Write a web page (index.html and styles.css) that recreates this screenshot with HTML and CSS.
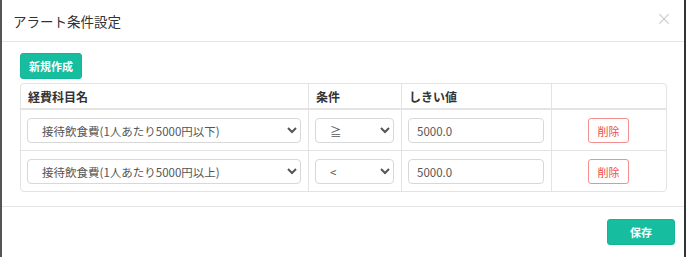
FILE: index.html
```html
<html>
  <head>
    <link rel="stylesheet" href="styles.css">
  </head>
  <body>
    <div class="frame">
      <div class="modal">
        <div class="modal-header">
          <h4 class="modal-title">アラート条件設定</h4>
          <span class="close">&times;</span>
        </div>
        <div class="modal-body">
          <button class="btn btn-primary">新規作成</button>
          <table class="alert-table">
            <thead>
              <tr>
                <th class="col-name">経費科目名</th>
                <th class="col-cond">条件</th>
                <th class="col-value">しきい値</th>
                <th class="col-action"></th>
              </tr>
            </thead>
            <tbody>
              <tr>
                <td>
                  <select class="form-control">
                    <option>接待飲食費(1人あたり5000円以下)</option>
                  </select>
                </td>
                <td>
                  <select class="form-control">
                    <option>≧</option>
                  </select>
                </td>
                <td><input class="form-control" type="text" value="5000.0"></td>
                <td class="action"><button class="btn btn-danger">削除</button></td>
              </tr>
              <tr>
                <td>
                  <select class="form-control">
                    <option>接待飲食費(1人あたり5000円以上)</option>
                  </select>
                </td>
                <td>
                  <select class="form-control">
                    <option>&lt;</option>
                  </select>
                </td>
                <td><input class="form-control" type="text" value="5000.0"></td>
                <td class="action"><button class="btn btn-danger">削除</button></td>
              </tr>
            </tbody>
          </table>
        </div>
        <div class="modal-footer">
          <button class="btn btn-primary btn-save">保存</button>
        </div>
      </div>
    </div>
  </body>
</html>
```

FILE: styles.css
```css
body {
  margin: 0;
  background: #fff;
  font-family: "Noto Sans CJK JP", "Noto Sans", sans-serif;
  color: #333;
}
.frame {
  width: 686px;
  height: 257px;
  display: flex;
}
.modal {
  width: 682px;
  height: 257px;
  border-left: 2px solid #555;
  border-right: 2px solid #333;
  background: #fff;
  display: flex;
  flex-direction: column;
}

/* HEADER ===================================== */
.modal-header {
  height: 41px;
  border-bottom: 1px solid #e5e5e5;
  display: flex;
  align-items: center;
  justify-content: space-between;
  padding: 0 12px 0 11px;
  box-sizing: content-box;
}
.modal-title {
  margin: 0;
  font-size: 13.5px;
  font-weight: normal;
  color: #333;
}
.close {
  font-size: 19px;
  color: #c8c8c8;
  font-family: "DejaVu Sans", sans-serif;
  font-weight: 300;
  line-height: 1;
  margin-top: -4px;
}

/* BODY ======================================= */
.modal-body {
  height: 165px;
  padding: 11px 0 0 18px;
  box-sizing: border-box;
  border-bottom: 1px solid #e5e5e5;
  display: flex;
  flex-direction: column;
  align-items: flex-start;
}
.btn {
  font-family: "Noto Sans CJK JP", sans-serif;
  font-size: 11px;
  font-weight: bold;
  border-radius: 3px;
  cursor: pointer;
  padding: 0;
}
.btn-primary {
  background: #16bd9f;
  border: 1px solid #13b596;
  color: #fff;
  width: 62px;
  height: 26px;
}
.btn-danger {
  background: #fff;
  border: 1px solid #f58e8e;
  color: #ee4d4d;
  width: 41px;
  height: 25px;
  font-weight: normal;
}

/* TABLE ====================================== */
.alert-table {
  margin-top: 4px;
  width: 647px;
  border-collapse: separate;
  border-spacing: 0;
  border: 1px solid #e3e3e3;
  border-radius: 4px;
  font-size: 11.5px;
}
.alert-table th {
  text-align: left;
  font-size: 12px;
  font-weight: bold;
  height: 26px;
  padding: 0 7px;
  border-bottom: 2px solid #e3e3e3;
  border-right: 1px solid #e3e3e3;
}
.alert-table td {
  padding: 8px 7px 7px 6px;
  border-right: 1px solid #e3e3e3;
}
.alert-table th:last-child, .alert-table td:last-child { border-right: none; }
.alert-table tbody tr:first-child td { border-bottom: 1px solid #e3e3e3; }
.col-name { width: 288px; box-sizing: border-box; }
.col-cond { width: 93px; box-sizing: border-box; }
.col-value { width: 150px; box-sizing: border-box; }
.action { text-align: center; }

.form-control {
  width: 100%;
  height: 25px;
  box-sizing: border-box;
  border: 1px solid #d8d8d8;
  border-radius: 4px;
  background: #fff;
  font-family: "Noto Sans CJK JP", sans-serif;
  font-size: 11.5px;
  color: #555;
  padding: 0 0 0 10px;
}
input.form-control { padding-left: 8px; }
.form-control:focus { outline: none; }

/* FOOTER ===================================== */
.modal-footer {
  flex: 1;
  display: flex;
  justify-content: flex-end;
  align-items: flex-start;
  padding: 12px 9px 0 0;
}
.btn-save {
  width: 68px;
  height: 26px;
}
```
